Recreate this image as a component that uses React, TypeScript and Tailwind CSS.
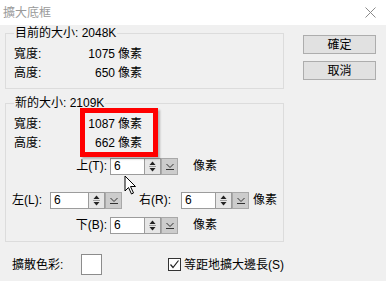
const font = { fontFamily: '"Liberation Sans", "Noto Sans CJK TC", sans-serif' };

function SpinBox({ inputW = 35 }: { inputW?: number }) {
  return (
    <div className="flex h-[17px]">
      <div
        className="flex items-center border border-[#9c9c9c] bg-white pl-[3px] text-[12px] leading-none"
        style={{ width: inputW }}
      >
        6
      </div>
      <div className="flex w-[16px] flex-col items-center justify-center border-y border-r border-[#9c9c9c] bg-[#e6e6e6]">
        <svg width="9" height="13" viewBox="0 0 9 13">
          <path d="M4.5 1.5 L7.5 5 L1.5 5 Z" fill="#222" />
          <line x1="1" y1="6.5" x2="8" y2="6.5" stroke="#9c9c9c" />
          <path d="M1.5 8 L7.5 8 L4.5 11.5 Z" fill="#222" />
        </svg>
      </div>
      <div className="flex w-[17px] items-center justify-center border border-[#a8a8a8] bg-[#cccccc]">
        <svg width="10" height="9" viewBox="0 0 10 9">
          <path d="M1.5 2 L5 5.5 L8.5 2" stroke="#333" fill="none" />
          <line x1="1" y1="7.5" x2="9" y2="7.5" stroke="#333" />
        </svg>
      </div>
    </div>
  );
}

function SizeRow({ label, value }: { label: string; value: string }) {
  return (
    <div className="flex h-[19px] items-center pl-[8px]">
      <span className="w-[60px]">{label}</span>
      <span className="w-[41px] text-right">{value}</span>
      <span className="ml-[3px]">像素</span>
    </div>
  );
}

export default function App() {
  return (
    <div className="relative h-[281px] w-[386px] overflow-hidden bg-[#f0f0f0] text-[12px] text-black" style={font}>
      {/* Title bar */}
      <div className="flex h-[25px] items-center justify-between bg-white pl-[3px] pr-[10px]">
        <span className="text-[#9a9a9a]">擴大底框</span>
        <svg width="11" height="11" viewBox="0 0 11 11">
          <path d="M0.5 0.5 L10.5 10.5 M10.5 0.5 L0.5 10.5" stroke="#8a8a8a" strokeWidth="1" />
        </svg>
      </div>

      <div className="flex">
        <div className="ml-[5px] w-[279px]">
          {/* Current size */}
          <fieldset className="border border-[#dcdcdc] pb-[6px]">
            <legend className="ml-[8px] px-[1px] leading-[16px]">目前的大小: 2048K</legend>
            <div className="pt-[3px]">
              <SizeRow label="寬度:" value="1075" />
              <SizeRow label="高度:" value="650" />
            </div>
          </fieldset>

          {/* New size */}
          <fieldset className="mt-[6px] border border-[#dcdcdc] pb-[7px]">
            <legend className="ml-[8px] px-[1px] leading-[16px]">新的大小: 2109K</legend>
            <div className="pt-[3px]">
              <SizeRow label="寬度:" value="1087" />
              <SizeRow label="高度:" value="662" />
            </div>

            <div className="mt-[5px] flex items-center">
              <span className="w-[104px] pr-[3px] text-right">上(T):</span>
              <SpinBox />
              <span className="ml-[15px]">像素</span>
            </div>

            <div className="mt-[16px] flex items-center">
              <span className="ml-[6px] w-[38px]">左(L):</span>
              <SpinBox inputW={39} />
              <span className="ml-[17px] w-[42px]">右(R):</span>
              <SpinBox />
              <span className="ml-[4px]">像素</span>
            </div>

            <div className="mt-[7px] flex items-center">
              <span className="w-[104px] pr-[3px] text-right">下(B):</span>
              <SpinBox />
              <span className="ml-[15px]">像素</span>
            </div>
          </fieldset>

          {/* Bottom options */}
          <div className="mt-[12px] flex items-center whitespace-nowrap">
            <span className="ml-[7px] w-[70px]">擴散色彩:</span>
            <div className="h-[21px] w-[21px] shrink-0 border border-[#8c8c8c] bg-white" />
            <label className="ml-[66px] flex shrink-0 items-center">
              <span className="flex h-[13px] w-[13px] items-center justify-center border border-[#333] bg-white">
                <svg width="11" height="11" viewBox="0 0 11 11">
                  <path d="M1.5 5.5 L4 8.5 L9.5 1.5" stroke="#222" strokeWidth="1.2" fill="none" />
                </svg>
              </span>
              <span className="ml-[3px]">等距地擴大邊長(S)</span>
            </label>
          </div>
        </div>

        {/* Buttons */}
        <div className="ml-[19px] mt-[10px] flex flex-col gap-[7px]">
          <button className="h-[19px] w-[73px] border border-[#adadad] bg-[#e1e1e1] leading-none">確定</button>
          <button className="h-[19px] w-[73px] border border-[#adadad] bg-[#e1e1e1] leading-none">取消</button>
        </div>
      </div>

      {/* Annotation highlight */}
      <div className="absolute left-[80px] top-[108px] h-[49px] w-[78px] border-[5px] border-[#ff0000] shadow-[2px_2px_2px_rgba(0,0,0,0.25)]" />

      {/* Mouse cursor */}
      <svg className="absolute left-[124px] top-[175px]" width="13" height="21" viewBox="0 0 13 21">
        <path d="M1 1 L1 16 L4.5 12.5 L7.5 19 L9.5 18 L6.5 11.5 L11.5 11.5 Z" fill="white" stroke="black" strokeWidth="1" strokeLinejoin="round" />
      </svg>
    </div>
  );
}
